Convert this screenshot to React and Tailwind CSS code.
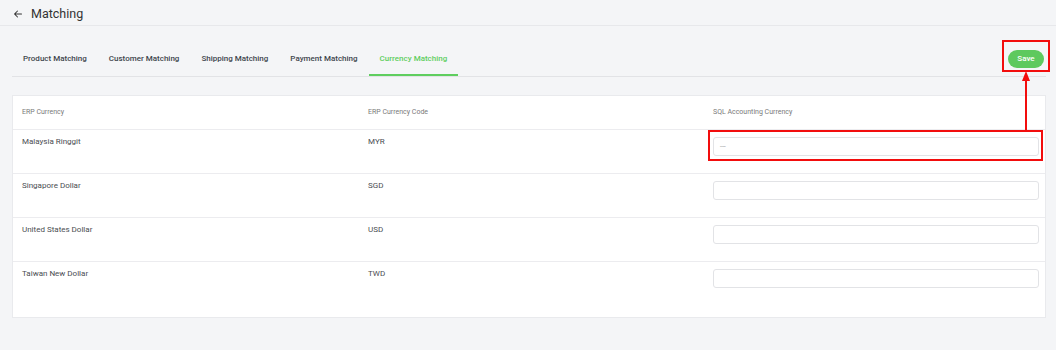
import { HiArrowLeft } from 'react-icons/hi';

const tabs = ['Product Matching', 'Customer Matching', 'Shipping Matching', 'Payment Matching', 'Currency Matching'];

const currencies = [
  { name: 'Malaysia Ringgit', code: 'MYR', value: '---' },
  { name: 'Singapore Dollar', code: 'SGD', value: '' },
  { name: 'United States Dollar', code: 'USD', value: '' },
  { name: 'Taiwan New Dollar', code: 'TWD', value: '' },
];

const App = () => {
  const active = 'Currency Matching';

  return (
    <div className="relative min-h-[350px] bg-[#f4f5f7] font-['Roboto',sans-serif] text-[#333]">
      {/* Page header */}
      <div className="flex h-[26px] items-center gap-[8px] border-b border-[#e7e8eb] px-[13px] pt-[3px]">
        <HiArrowLeft className="h-[10px] w-[10px] text-[#333]" />
        <h1 className="text-[12.5px] leading-none text-[#333]">Matching</h1>
      </div>

      <div className="pl-[12px] pr-[10px]">
        {/* Tabs */}
        <div className="mt-[13px] flex items-center border-b border-[#e2e3e6]">
          {tabs.map(t => (
            <button
              key={t}
              className={
                t === active
                  ? 'border-b-2 border-[#5fce5f] px-[11px] pt-[14px] pb-[9px] text-[8px] leading-[12px] font-medium text-[#5fce5f]'
                  : 'border-b-2 border-transparent px-[11px] pt-[14px] pb-[9px] text-[8px] leading-[12px] font-medium text-[#40454d]'
              }
            >
              {t}
            </button>
          ))}
          <div className="relative ml-auto mr-[2px] mb-[3px]">
            <button className="h-[18px] w-[36px] rounded-full bg-[#5ec95e] text-[8px] font-medium text-white">
              Save
            </button>
            <div className="absolute -top-[4px] -bottom-[4px] -left-[6px] -right-[6px] border-2 border-[#f20d0d]" />
          </div>
        </div>

        {/* Currency table */}
        <div className="mt-[18px] border border-[#e9eaed] bg-white pb-[11px]">
          <div className="grid h-[34px] grid-cols-[346px_345px_1fr] items-center border-b border-[#ececef] text-[7px] text-[#7a7a7a]">
            <div className="pl-[9px]">ERP Currency</div>
            <div className="pl-[9px]">ERP Currency Code</div>
            <div className="pl-[9px]">SQL Accounting Currency</div>
          </div>
          {currencies.map((c, idx) => (
            <div
              key={c.code}
              className={
                idx === currencies.length - 1
                  ? 'grid h-[44px] grid-cols-[346px_345px_1fr] text-[8px] leading-[12px] text-[#4a4d52]'
                  : 'grid h-[44px] grid-cols-[346px_345px_1fr] border-b border-[#ececef] text-[8px] leading-[12px] text-[#4a4d52]'
              }
            >
              <div className="pl-[9px] pt-[6px]">{c.name}</div>
              <div className="pl-[9px] pt-[6px]">{c.code}</div>
              <div className="pl-[9px] pr-[6px] pt-[7px]">
                <div className="relative">
                  <div className="flex h-[19px] items-center rounded-[3px] border border-[#e2e3e6] bg-white px-[6px] text-[7px] text-[#9a9ea4]">
                    {c.value}
                  </div>
                  {idx === 0 && (
                    <div className="absolute -top-[7px] -bottom-[5px] -left-[5px] -right-[4px] border-2 border-[#f20d0d]" />
                  )}
                </div>
              </div>
            </div>
          ))}
        </div>
      </div>

      {/* Annotation arrow */}
      <svg className="absolute left-[1020px] top-[70px]" width="12" height="60" viewBox="0 0 12 60">
        <line x1="6" y1="8" x2="6" y2="60" stroke="#f20d0d" strokeWidth="2" />
        <polygon points="6,1 2,11 10,11" fill="#f20d0d" />
      </svg>
    </div>
  );
};

export default App;
